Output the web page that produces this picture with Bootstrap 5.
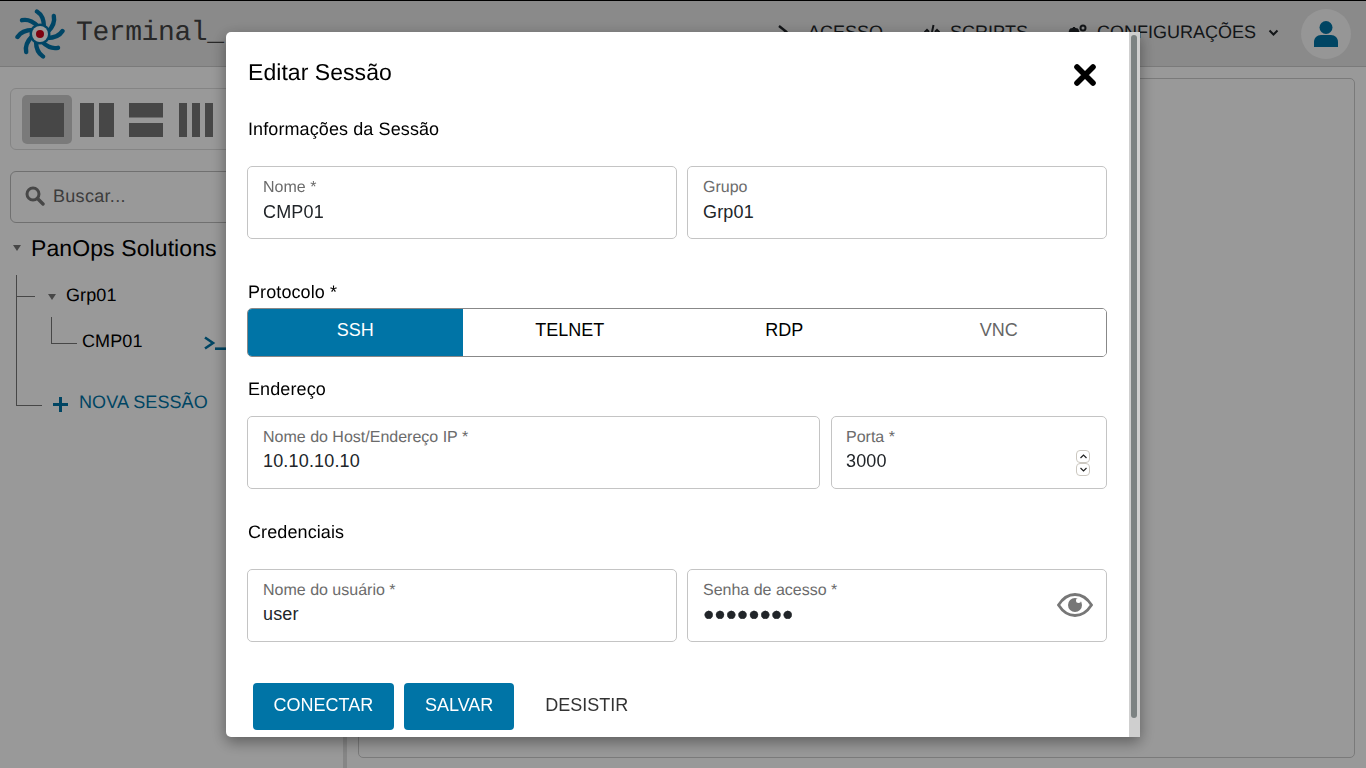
<!DOCTYPE html>
<html lang="pt-BR">
<head>
<meta charset="utf-8">
<title>Editar Sessão</title>
<link href="https://cdn.jsdelivr.net/npm/bootstrap@5.3.0/dist/css/bootstrap.min.css" rel="stylesheet">
<style>
html,body{height:100%;overflow:hidden}
body{font-family:"Liberation Sans",Arial,sans-serif;background:#fff;color:#000;font-size:18px;text-rendering:geometricPrecision}
.shell{height:768px;display:flex;flex-direction:column;border-top:1px solid #000}
.topbar{height:66px;flex:none;background:#e6e6e6;border-bottom:1px solid #ccc;padding:0 15px}
.brand-name{font-family:"Liberation Mono",monospace;font-size:28px;letter-spacing:-.4px;color:#444;margin:0 0 0 11px}
.topnav{font-size:18px;color:#212529;margin-bottom:3px}
.navitem{display:flex;align-items:center;white-space:nowrap}
.navitem svg{flex:none;margin-right:10px}
.nav-a{margin-right:41px}
.nav-b{margin-right:40px}
.chev{margin-left:12px;flex:none}
.avatar{width:50px;height:50px;border-radius:50%;background:#fafafa;margin-left:22px;margin-top:3px}
.workarea{flex:1;display:flex;min-height:0}
.sidepane{width:333px;flex:none;padding:21px 0 0 10px;border-right:4px solid #e0e0e0;box-sizing:content-box;overflow:hidden}
.layoutbox{border:1px solid #ddd;border-radius:6px;height:62px;width:400px;padding:6px 11px;display:flex}
.layoutbtn{width:49.5px;height:49px;border-radius:5px;display:flex;align-items:center;justify-content:center}
.layoutbtn.on{background:#ccc;width:50px}
.searchbox{height:52px;width:400px;margin-top:21px;border:1px solid #bbb;border-radius:6px;padding:0 0 2px 14px;color:#666;letter-spacing:.3px}
.searchbox span{margin-left:8px}
.treezone{margin-top:10px;margin-left:3px}
.caret-d{width:0;height:0;border-left:4px solid transparent;border-right:4px solid transparent;border-top:6px solid #777;display:inline-block;flex:none}
.org-name{font-size:23px;line-height:30px;margin-left:10px;letter-spacing:.1px;white-space:nowrap}
.treebody{margin-left:3px;margin-top:12px}
.row-grp{height:42px;display:flex;align-items:flex-start;border-left:1px solid #777}
.elbow-a{width:18px;height:22px;border-bottom:1px solid #777;flex:none}
.caret-grp{margin:19px 0 0 13px}
.grp-label{margin:8px 0 0 10px;line-height:24px;letter-spacing:.1px}
.grp-kids{border-left:1px solid #777;height:66px;padding-left:34px;display:flex;align-items:flex-start}
.elbow-b{width:26px;height:27px;border-left:1px solid #777;border-bottom:1px solid #777;flex:none}
.cmp-label{line-height:24px;margin:12px 0 0 5px;letter-spacing:.1px;width:60px;white-space:nowrap}
.term-ico{margin:19px 0 0 62px;flex:none}
.row-new{display:flex;align-items:flex-start;height:40px}
.elbow-c{width:26px;height:23px;border-left:1px solid #777;border-bottom:1px solid #777;flex:none}
.new-label{color:#0074a6;line-height:24px;margin:7px 0 0 11px;letter-spacing:.1px;white-space:nowrap}
.plus-ico{margin:14px 0 0 11px;flex:none}
.mainpane{flex:1;padding:11px 11px 10px 11px;min-width:0}
.termcard{height:100%;border:1px solid #ccc;border-radius:5px}
.dim{position:fixed;inset:0;background:rgba(0,0,0,.4);z-index:1050}
.sheet{position:fixed;left:226px;top:32px;width:914px;height:705px;z-index:1055;background:#fff;border-radius:5px 0 0 5px;box-shadow:0 5px 15px rgba(0,0,0,.4);display:flex;overflow:hidden}
.sheet-body{flex:1;min-width:0;padding:0 22px 0 21px}
.rail{width:11px;flex:none;background:#cfcfcf;padding:3px 3px 0 2px}
.rail-thumb{height:683px;background:#7c8282;border-radius:3px}
.sheet-head{height:80px;display:flex;align-items:center;justify-content:space-between}
.sheet-title{font-size:23px;margin:2px 0 0 1px;font-weight:400;letter-spacing:.05px}
.x-btn{border:0;background:none;padding:0;margin:6px 10px 0 0;line-height:0}
.sec-a{height:34px;line-height:34px;margin-left:1px;margin-bottom:20px;letter-spacing:.1px}
.sec-b{height:24px;line-height:24px;margin-left:1px;letter-spacing:.1px}
.fieldrow{display:flex}
.fieldrow.even{gap:10px}
.fieldrow.wide{gap:11px}
.fbox{height:73px;border:1px solid #c4c4c4;border-radius:5px;padding:11px 15px 0 15px;display:flex;flex-direction:column;position:relative;background:#fff}
.fbox.lower input{margin-top:1px}
.w430{width:430px}.w420{width:420px}.w573{width:573px}.w276{width:276px;padding-left:14px}
.fbox label{font-size:16px;line-height:20px;color:#6b6b6b;margin:0}
.fbox input{border:0;outline:0;padding:0;font:inherit;font-size:18px;line-height:26px;height:26px;color:#212529;background:none;width:100%;margin-top:0;letter-spacing:.17px}
.fbox input.pw-val{font-size:18.7px;letter-spacing:0;-webkit-text-stroke:.4px #212529}
.protogroup{height:49px;margin-top:4px;margin-bottom:20px;display:flex;border:1px solid #888;border-radius:5px;overflow:hidden}
.protogroup .btn{flex:1;border:0;border-radius:0;font-size:18px;color:#000;padding:0 0 4px;background:#fff}
.protogroup .btn.sel{background:#0074a6;color:#fff}
.protogroup .btn.off{color:#666}
.gap-15{height:15px}
.spin{position:absolute;right:16px;top:33px;display:flex;flex-direction:column}
.spin span{width:14px;height:13px;border:1px solid #ccc8c0;border-radius:4px;display:flex;align-items:center;justify-content:center;background:#fff}
.eye-btn{position:absolute;right:13px;top:22px;line-height:0}
.actions{display:flex;padding:41px 0 23px 6px;gap:10px}
.act{height:47px;font-size:18px;border-radius:4px;padding:0 20.5px 2px;border:0}
.act-main{background:#0074a6;color:#fff}
.act-main:hover{background:#0074a6;color:#fff}
.act-save{width:110px;padding-left:1px;padding-right:0}
.act-plain{background:none;color:#333;margin-left:1px}
</style>
</head>
<body>
<div class="shell">
  <nav class="topbar d-flex align-items-center">
    <svg width="50" height="50" viewBox="-25 -25 50 50">
      <g fill="none" stroke="#0074a8" stroke-width="4.400" stroke-linecap="round">
        <path d="M-3-22.500C1-20 4-14 4-7"/>
        <path d="M-3-22.500C1-20 4-14 4-7" transform="rotate(45)"/>
        <path d="M-3-22.500C1-20 4-14 4-7" transform="rotate(90)"/>
        <path d="M-3-22.500C1-20 4-14 4-7" transform="rotate(135)"/>
        <path d="M-3-22.500C1-20 4-14 4-7" transform="rotate(180)"/>
        <path d="M-3-22.500C1-20 4-14 4-7" transform="rotate(225)"/>
        <path d="M-3-22.500C1-20 4-14 4-7" transform="rotate(270)"/>
        <path d="M-3-22.500C1-20 4-14 4-7" transform="rotate(315)"/>
        <circle r="9" stroke-width="3"/>
      </g>
      <circle r="8" fill="#fff"/>
      <circle r="4" fill="#d0021b"/>
    </svg>
    <span class="brand-name">Terminal_</span>
    <div class="topnav d-flex align-items-center ms-auto">
      <span class="navitem nav-a">
        <svg width="20" height="16" viewBox="0 0 20 16"><path d="M1 2l7 5.500L1 13" fill="none" stroke="#212529" stroke-width="2.400"/><rect x="10" y="12" width="10" height="2.400" fill="#212529"/></svg>ACESSO</span>
      <span class="navitem nav-b">
        <svg width="16" height="16" viewBox="0 0 16 16"><path d="M0 9l3-3 2 2M16 9l-3-3-2 2M9.500 1L6.500 15" fill="none" stroke="#212529" stroke-width="2"/></svg>SCRIPTS</span>
      <span class="navitem">
        <svg width="19" height="16" viewBox="0 0 19 16"><circle cx="6" cy="9" r="4" fill="none" stroke="#212529" stroke-width="3"/><path d="M6 3v12M0 9h12M2 5l8 8M10 5l-8 8" stroke="#212529" stroke-width="2"/><circle cx="15" cy="4" r="2.500" fill="none" stroke="#212529" stroke-width="2"/></svg>CONFIGURAÇÕES</span>
      <svg class="chev" width="11" height="7" viewBox="0 0 11 7"><path d="M1.500 1.500L5.500 5.500 9.500 1.500" fill="none" stroke="#212529" stroke-width="2"/></svg>
      <span class="avatar d-flex align-items-center justify-content-center">
        <svg width="24" height="26" viewBox="0 0 24 26"><circle cx="12" cy="6.500" r="6.500" fill="#0074a6"/><path d="M0 26v-5c0-4 3-7 7-7h10c4 0 7 3 7 7v5z" fill="#0074a6"/></svg>
      </span>
    </div>
  </nav>
  <div class="workarea">
    <aside class="sidepane">
      <div class="layoutbox">
        <div class="layoutbtn on"><svg width="34" height="34"><rect width="34" height="34" fill="#777"/></svg></div>
        <div class="layoutbtn"><svg width="34" height="34"><rect width="14" height="34" fill="#777"/><rect x="19" width="15" height="34" fill="#777"/></svg></div>
        <div class="layoutbtn"><svg width="34" height="34"><rect width="34" height="14.500" fill="#777"/><rect y="20" width="34" height="14" fill="#777"/></svg></div>
        <div class="layoutbtn"><svg width="34" height="34"><rect width="8" height="34" fill="#777"/><rect x="13" width="8" height="34" fill="#777"/><rect x="26" width="8" height="34" fill="#777"/></svg></div>
      </div>
      <div class="searchbox d-flex align-items-center">
        <svg width="20" height="20" viewBox="0 0 20 20"><circle cx="8" cy="8" r="6" fill="none" stroke="#777" stroke-width="3"/><path d="M12.500 12.500L18 18" stroke="#777" stroke-width="3.400" stroke-linecap="round"/></svg>
        <span>Buscar...</span>
      </div>
      <div class="treezone">
        <div class="d-flex align-items-center"><i class="caret-d"></i><span class="org-name">PanOps Solutions</span></div>
        <div class="treebody">
          <div class="row-grp"><div class="elbow-a"></div><i class="caret-d caret-grp"></i><span class="grp-label">Grp01</span></div>
          <div class="grp-kids"><div class="elbow-b"></div><span class="cmp-label">CMP01</span>
            <svg class="term-ico" width="22" height="14" viewBox="0 0 22 14"><path d="M1 1.500l8 5.500L1 12.500" fill="none" stroke="#0074a6" stroke-width="2.600"/><rect x="11" y="11.400" width="11" height="2.600" fill="#0074a6"/></svg>
          </div>
          <div class="row-new"><div class="elbow-c"></div>
            <svg class="plus-ico" width="15" height="15" viewBox="0 0 15 15"><path d="M7.500 0v15M0 7.500h15" stroke="#0074a6" stroke-width="3"/></svg>
            <span class="new-label">NOVA SESSÃO</span></div>
        </div>
      </div>
    </aside>
    <main class="mainpane"><div class="termcard"></div></main>
  </div>
</div>
<div class="dim"></div>
<div class="sheet" role="dialog">
  <div class="sheet-body">
    <div class="sheet-head">
      <h5 class="sheet-title">Editar Sessão</h5>
      <button class="x-btn" aria-label="Fechar"><svg width="24" height="24" viewBox="0 0 24 24"><path d="M4 4L20 20M20 4L4 20" stroke="#000" stroke-width="5.600" stroke-linecap="round"/></svg></button>
    </div>
    <div class="sec-a">Informações da Sessão</div>
    <div class="fieldrow even">
      <div class="fbox w430 lower"><label>Nome *</label><input type="text" value="CMP01"></div>
      <div class="fbox w420 lower"><label>Grupo</label><input type="text" value="Grp01"></div>
    </div>
    <div class="sec-b" style="margin-top:41px">Protocolo *</div>
    <div class="protogroup">
      <button class="btn sel">SSH</button><button class="btn">TELNET</button><button class="btn">RDP</button><button class="btn off">VNC</button>
    </div>
    <div class="sec-b">Endereço</div>
    <div class="gap-15"></div>
    <div class="fieldrow wide">
      <div class="fbox w573"><label>Nome do Host/Endereço IP *</label><input type="text" value="10.10.10.10"></div>
      <div class="fbox w276"><label>Porta *</label><input type="text" value="3000">
        <div class="spin"><span><svg width="7" height="5" viewBox="0 0 7 5"><path d="M.5 4L3.500 1 6.500 4" fill="none" stroke="#222" stroke-width="1.200"/></svg></span><span><svg width="7" height="5" viewBox="0 0 7 5"><path d="M.5 1L3.500 4 6.500 1" fill="none" stroke="#222" stroke-width="1.200"/></svg></span></div>
      </div>
    </div>
    <div class="sec-b" style="margin-top:31px;margin-bottom:25px">Credenciais</div>
    <div class="fieldrow even">
      <div class="fbox w430"><label>Nome do usuário *</label><input type="text" value="user"></div>
      <div class="fbox w420"><label>Senha de acesso *</label><input class="pw-val" type="text" value="●●●●●●●●">
        <span class="eye-btn"><svg width="36" height="26" viewBox="0 0 36 26"><path d="M1.500 13C6 6 11 2.500 18 2.500S30 6 34.500 13C30 20 25 23.500 18 23.500S6 20 1.500 13z" fill="none" stroke="#777" stroke-width="2.800"/><circle cx="18" cy="13" r="7" fill="#777"/><circle cx="21.500" cy="8.500" r="2.500" fill="#fff"/></svg></span>
      </div>
    </div>
    <div class="actions">
      <button class="btn act act-main">CONECTAR</button>
      <button class="btn act act-main act-save">SALVAR</button>
      <button class="btn act act-plain">DESISTIR</button>
    </div>
  </div>
  <div class="rail"><div class="rail-thumb"></div></div>
</div>
<script src="https://cdn.jsdelivr.net/npm/bootstrap@5.3.0/dist/js/bootstrap.bundle.min.js"></script>
</body>
</html>
